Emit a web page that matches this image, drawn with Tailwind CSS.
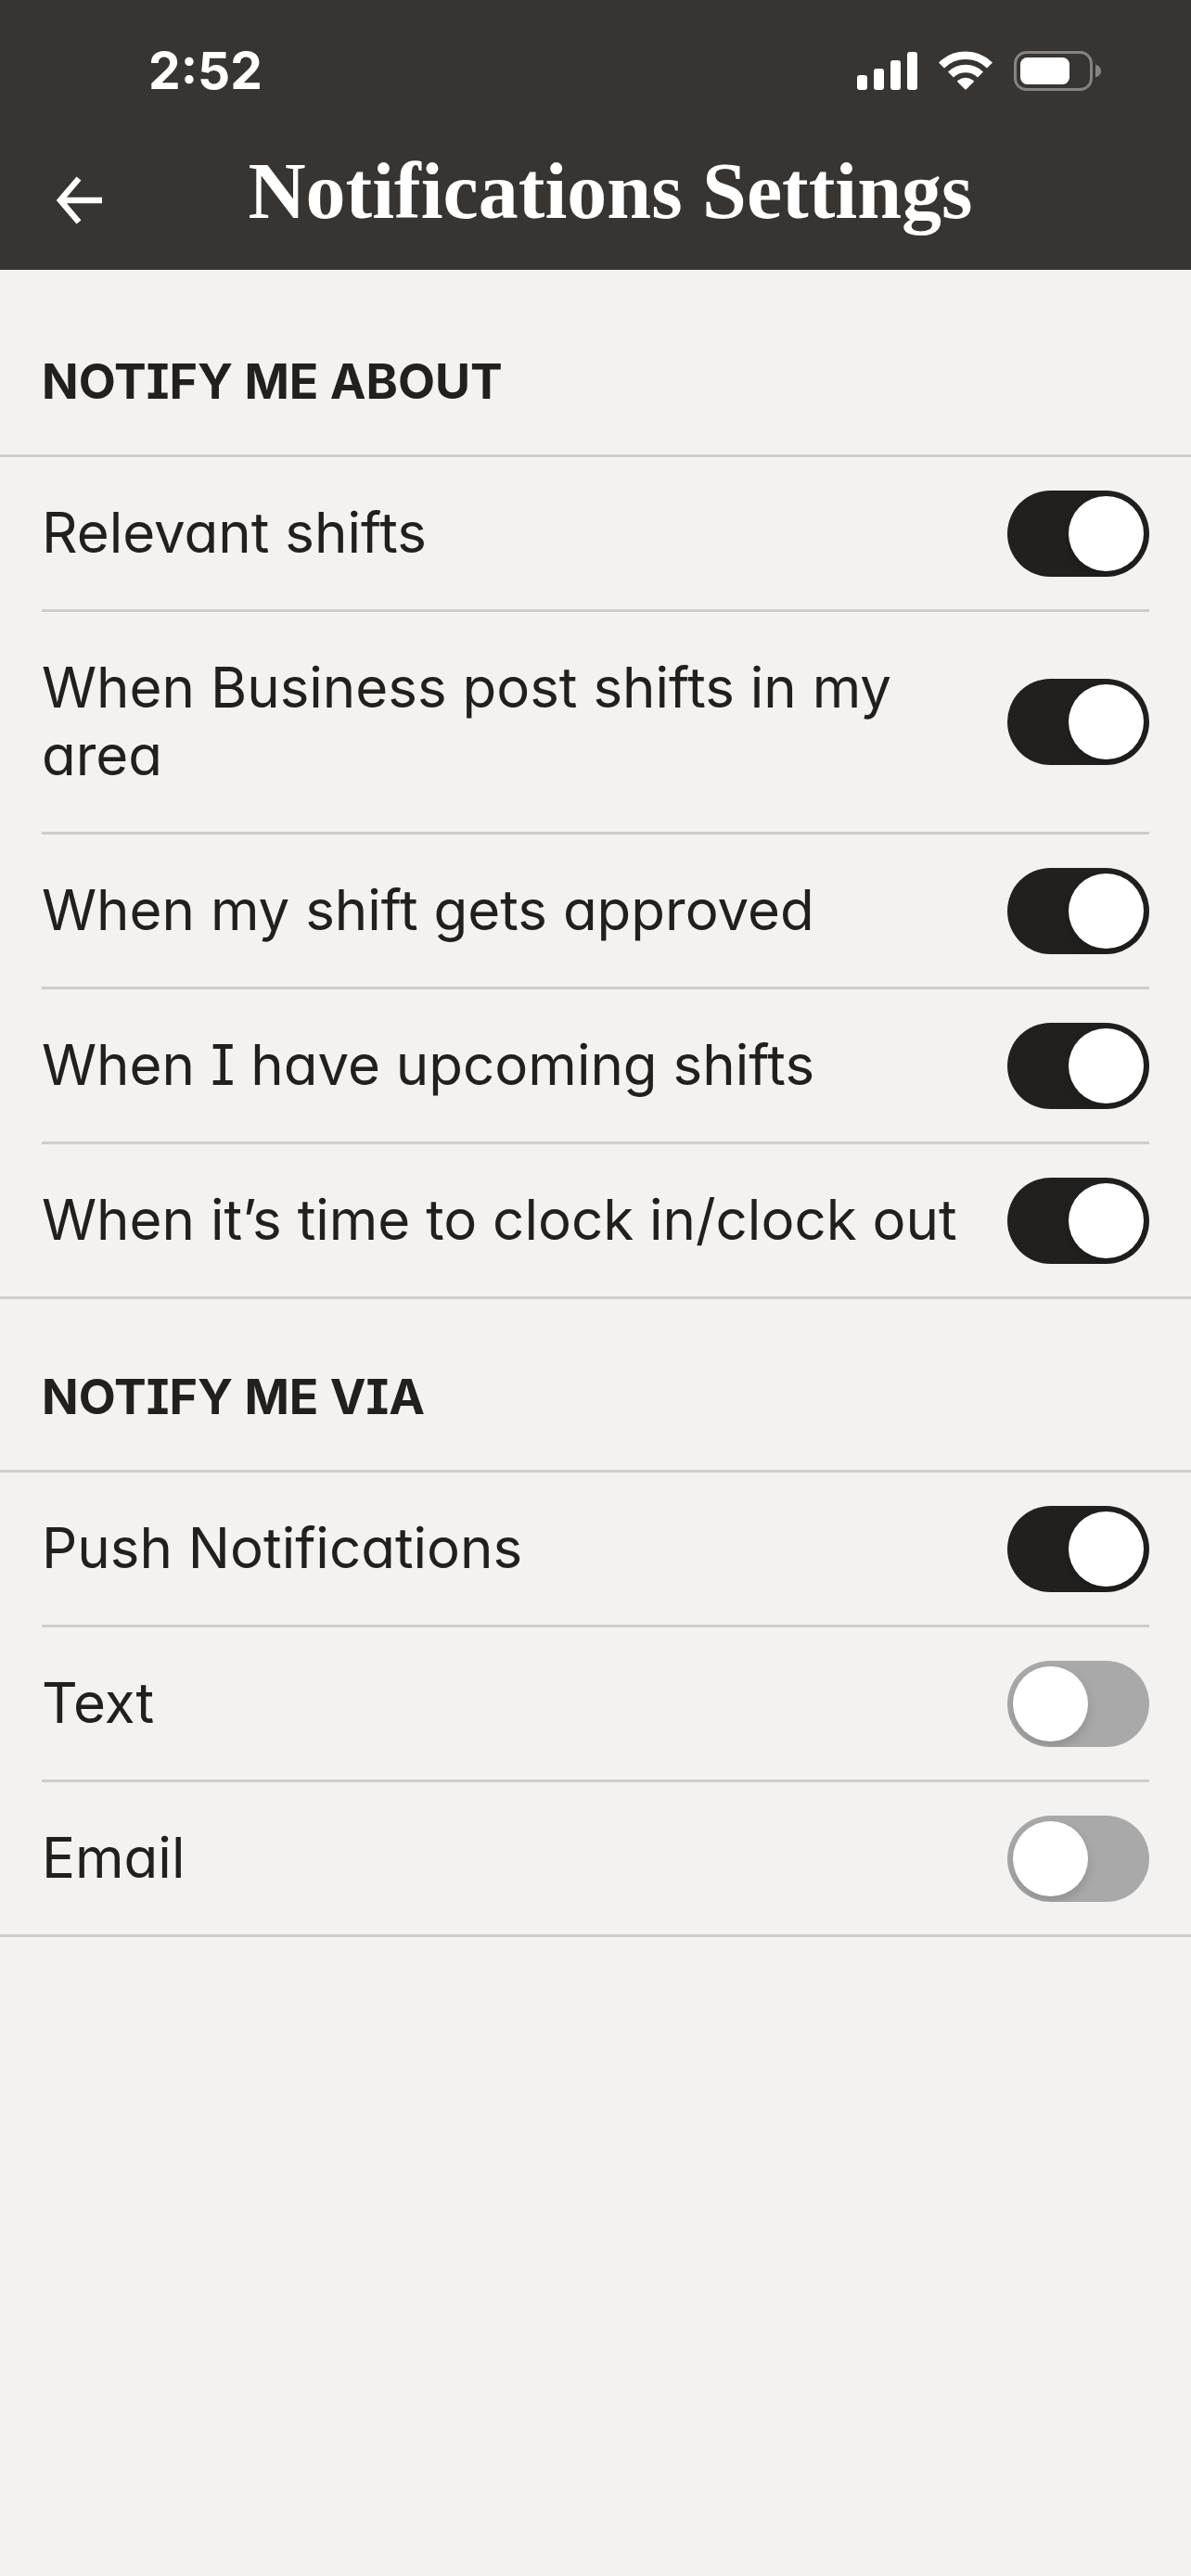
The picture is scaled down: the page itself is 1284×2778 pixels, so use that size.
<!DOCTYPE html>
<html lang="en">
<head>
    <meta charset="UTF-8">
    <meta name="viewport" content="width=device-width, initial-scale=1.0">
    <title>Notifications Settings</title>
    <!-- Tailwind CSS -->
    <script src="https://cdn.jsdelivr.net/npm/@tailwindcss/browser@4"></script>
</head>
<body class="min-h-screen bg-[#f3f2f0] text-[#21201e] font-['Inter',sans-serif] [font-feature-settings:'cv08','cv11']">
    <!-- Header -->
    <header class="bg-[#383431] text-white">
        <!-- Status Bar -->
        <div class="flex items-center justify-between h-[152px] pl-[160px] pr-[96px]">
            <span class="font-bold text-[55px] leading-[60px]">2:52</span>
            <div class="flex items-center gap-[23px]">
                <svg class="w-[65px] h-[44px]" viewBox="0 0 65 44" fill="currentColor" aria-label="Signal">
                    <rect x="0" y="27" width="11" height="16" rx="3"/>
                    <rect x="18" y="20" width="11" height="23" rx="3"/>
                    <rect x="36" y="11" width="11" height="32" rx="3"/>
                    <rect x="54" y="2" width="11" height="41" rx="3"/>
                </svg>
                <svg class="w-[58px] h-[44px]" viewBox="0 0 58 44" fill="none" stroke="currentColor" aria-label="Wi-Fi">
                    <path d="M3 16.500A37 37 0 0 1 55 16.500" stroke-width="8.500"/>
                    <path d="M13 26.500A23 23 0 0 1 45 26.500" stroke-width="8.500"/>
                    <path d="M20.500 34.500Q19.500 33.500 20.600 32.700Q29 27 37.400 32.700Q38.500 33.500 37.500 34.500L30 42Q29 43 28 42Z" fill="currentColor" stroke="none"/>
                </svg>
                <svg class="w-[95px] h-[44px]" viewBox="0 0 95 44" aria-label="Battery">
                    <rect x="1.500" y="2.500" width="82" height="40" rx="12" fill="none" stroke="#858381" stroke-width="3"/>
                    <rect x="7" y="8" width="53" height="29" rx="7.500" fill="#fff"/>
                    <path d="M88 15.500Q94 17.500 94 22.500T88 29.500Z" fill="#858381"/>
                </svg>
            </div>
        </div>
        <!-- Title Bar -->
        <div class="flex items-start h-[139px] px-[48px]">
            <button type="button" aria-label="Back" class="mt-[28px] size-[72px] shrink-0">
                <svg class="size-[72px]" viewBox="0 0 72 72" fill="none" stroke="currentColor" stroke-width="6.500">
                    <path d="M62 36H17M37 12.500L17 36L37 59.500"/>
                </svg>
            </button>
            <h1 class="flex-1 text-center mt-[4px] pr-[40px] font-['Liberation_Serif',serif] font-bold text-[86px] leading-[100px]">Notifications Settings</h1>
        </div>
    </header>

    <main>
        <!-- Notify Me About -->
        <section>
            <h2 class="px-[45px] pt-[89px] pb-[46px] font-bold text-[52px] leading-[64px]">NOTIFY ME ABOUT</h2>
            <ul class="border-y-3 border-[#cfcdc7] px-[45px] divide-y-3 divide-[#cfcdc7]">
                <li class="flex items-center justify-between gap-[24px]">
                    <label for="relevant" class="flex-1 pt-[45px] pb-[46px] text-[60px] leading-[73px]">Relevant shifts</label>
                    <input type="checkbox" role="switch" id="relevant" checked class="flex items-center shrink-0 appearance-none overflow-hidden w-[153px] h-[93px] p-[6px] rounded-full bg-[#a9a9a9] checked:bg-[#21201e] checked:justify-end before:size-[81px] before:rounded-full before:bg-white before:shadow-[0_6px_12px_rgba(0,0,0,0.15)]">
                </li>
                <li class="flex items-center justify-between gap-[24px]">
                    <label for="business" class="flex-1 pt-[45px] pb-[46px] text-[60px] leading-[73px]">When Business post shifts in my area</label>
                    <input type="checkbox" role="switch" id="business" checked class="flex items-center shrink-0 appearance-none overflow-hidden w-[153px] h-[93px] p-[6px] rounded-full bg-[#a9a9a9] checked:bg-[#21201e] checked:justify-end before:size-[81px] before:rounded-full before:bg-white before:shadow-[0_6px_12px_rgba(0,0,0,0.15)]">
                </li>
                <li class="flex items-center justify-between gap-[24px]">
                    <label for="approved" class="flex-1 pt-[45px] pb-[46px] text-[60px] leading-[73px]">When my shift gets approved</label>
                    <input type="checkbox" role="switch" id="approved" checked class="flex items-center shrink-0 appearance-none overflow-hidden w-[153px] h-[93px] p-[6px] rounded-full bg-[#a9a9a9] checked:bg-[#21201e] checked:justify-end before:size-[81px] before:rounded-full before:bg-white before:shadow-[0_6px_12px_rgba(0,0,0,0.15)]">
                </li>
                <li class="flex items-center justify-between gap-[24px]">
                    <label for="upcoming" class="flex-1 pt-[45px] pb-[46px] text-[60px] leading-[73px]">When I have upcoming shifts</label>
                    <input type="checkbox" role="switch" id="upcoming" checked class="flex items-center shrink-0 appearance-none overflow-hidden w-[153px] h-[93px] p-[6px] rounded-full bg-[#a9a9a9] checked:bg-[#21201e] checked:justify-end before:size-[81px] before:rounded-full before:bg-white before:shadow-[0_6px_12px_rgba(0,0,0,0.15)]">
                </li>
                <li class="flex items-center justify-between gap-[24px]">
                    <label for="clock" class="flex-1 pt-[45px] pb-[46px] text-[60px] leading-[73px]">When it’s time to clock in/clock out</label>
                    <input type="checkbox" role="switch" id="clock" checked class="flex items-center shrink-0 appearance-none overflow-hidden w-[153px] h-[93px] p-[6px] rounded-full bg-[#a9a9a9] checked:bg-[#21201e] checked:justify-end before:size-[81px] before:rounded-full before:bg-white before:shadow-[0_6px_12px_rgba(0,0,0,0.15)]">
                </li>
            </ul>
        </section>

        <!-- Notify Me Via -->
        <section>
            <h2 class="px-[45px] pt-[74px] pb-[46px] font-bold text-[52px] leading-[64px]">NOTIFY ME VIA</h2>
            <ul class="border-y-3 border-[#cfcdc7] px-[45px] divide-y-3 divide-[#cfcdc7]">
                <li class="flex items-center justify-between gap-[24px]">
                    <label for="push" class="flex-1 pt-[45px] pb-[46px] text-[60px] leading-[73px]">Push Notifications</label>
                    <input type="checkbox" role="switch" id="push" checked class="flex items-center shrink-0 appearance-none overflow-hidden w-[153px] h-[93px] p-[6px] rounded-full bg-[#a9a9a9] checked:bg-[#21201e] checked:justify-end before:size-[81px] before:rounded-full before:bg-white before:shadow-[0_6px_12px_rgba(0,0,0,0.15)]">
                </li>
                <li class="flex items-center justify-between gap-[24px]">
                    <label for="text" class="flex-1 pt-[45px] pb-[46px] text-[60px] leading-[73px]">Text</label>
                    <input type="checkbox" role="switch" id="text" class="flex items-center shrink-0 appearance-none overflow-hidden w-[153px] h-[93px] p-[6px] rounded-full bg-[#a9a9a9] checked:bg-[#21201e] checked:justify-end before:size-[81px] before:rounded-full before:bg-white before:shadow-[0_6px_12px_rgba(0,0,0,0.15)]">
                </li>
                <li class="flex items-center justify-between gap-[24px]">
                    <label for="email" class="flex-1 pt-[45px] pb-[46px] text-[60px] leading-[73px]">Email</label>
                    <input type="checkbox" role="switch" id="email" class="flex items-center shrink-0 appearance-none overflow-hidden w-[153px] h-[93px] p-[6px] rounded-full bg-[#a9a9a9] checked:bg-[#21201e] checked:justify-end before:size-[81px] before:rounded-full before:bg-white before:shadow-[0_6px_12px_rgba(0,0,0,0.15)]">
                </li>
            </ul>
        </section>
    </main>
</body>
</html>
